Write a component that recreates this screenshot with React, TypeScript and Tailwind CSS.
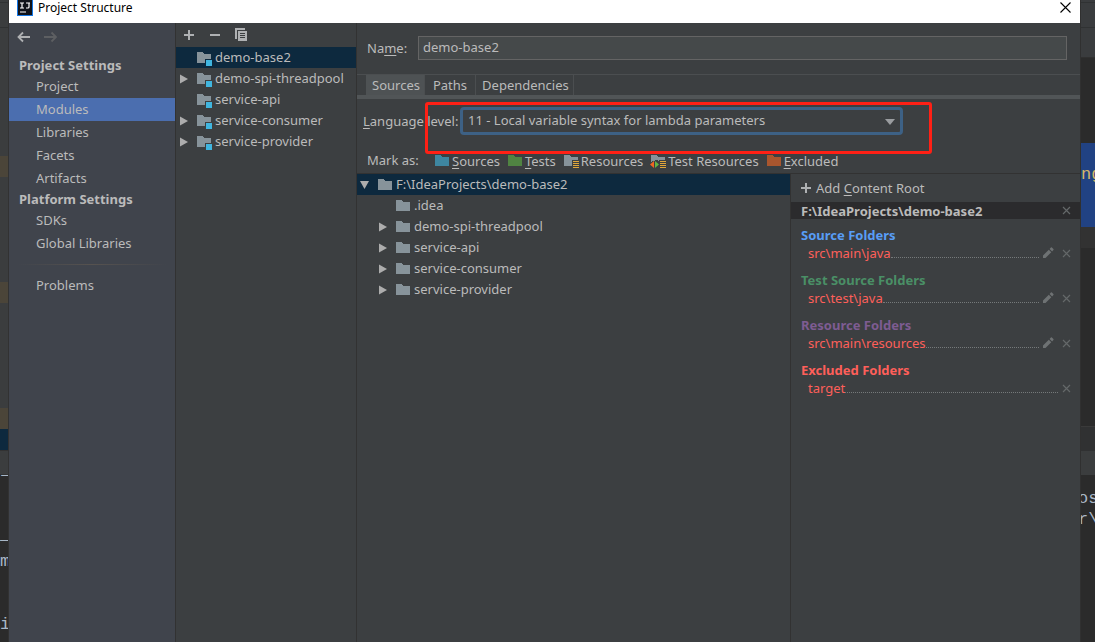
import { useState, type ReactNode } from "react";

/* ─────────────────────────────────────────────
   DATA
───────────────────────────────────────────── */
type TreeItem = { name: string; expandable: boolean };

const PROJECT_SETTINGS = ["Project", "Modules", "Libraries", "Facets", "Artifacts"];
const PLATFORM_SETTINGS = ["SDKs", "Global Libraries"];

const MODULES: TreeItem[] = [
  { name: "demo-base2", expandable: false },
  { name: "demo-spi-threadpool", expandable: true },
  { name: "service-api", expandable: false },
  { name: "service-consumer", expandable: true },
  { name: "service-provider", expandable: true },
];

const FOLDERS: TreeItem[] = [
  { name: ".idea", expandable: false },
  { name: "demo-spi-threadpool", expandable: true },
  { name: "service-api", expandable: true },
  { name: "service-consumer", expandable: true },
  { name: "service-provider", expandable: true },
];

const TABS = [
  { name: "Sources", padding: "pl-1.5 pr-1" },
  { name: "Paths", padding: "px-2" },
  { name: "Dependencies", padding: "pl-1.5 pr-1" },
];

const ROOT_GROUPS = [
  { title: "Source Folders", path: "src\\main\\java", color: "text-[#589df6]", editable: true },
  { title: "Test Source Folders", path: "src\\test\\java", color: "text-[#4a8f66]", editable: true },
  { title: "Resource Folders", path: "src\\main\\resources", color: "text-[#7e5c92]", editable: true },
  { title: "Excluded Folders", path: "target", color: "text-[#ff5f5a]", editable: false },
];

/* ─────────────────────────────────────────────
   ICONS
───────────────────────────────────────────── */
function FolderIcon({ color = "#87939a", badge }: { color?: string; badge?: "module" | "resources" | "test" }) {
  return (
    <svg width="16" height="16" viewBox="0 0 16 16" className="shrink-0" shapeRendering="crispEdges">
      {!badge && <path d="M1 2h5l2 2h7v9H1z" fill={color} />}
      {badge === "module" && (
        <>
          <path d="M1 2h5l2 2h7v5H9v4H1z" fill={color} />
          <path d="M10 10h6v6h-6z" fill="#40b6e0" />
        </>
      )}
      {badge === "resources" && (
        <>
          <path d="M1 2h5l2 2h7v3H9v6H1z" fill={color} />
          <path d="M10 8h6v1h-6zM10 10h6v1h-6zM10 12h6v1h-6zM10 14h6v1h-6z" fill="#e0a63a" />
        </>
      )}
      {badge === "test" && (
        <>
          <path d="M1 2h5l2 2h7v3H9v1L6 7 3 8 1 9z" fill={color} />
          <path d="M10 8h6v1h-6zM10 10h6v1h-6zM10 12h6v1h-6zM10 14h6v1h-6z" fill="#e0a63a" />
          <path d="M4 8v7L0 11.500z" fill="#f26522" shapeRendering="auto" />
          <path d="M5 8v7l4-3.500z" fill="#62b543" shapeRendering="auto" />
        </>
      )}
    </svg>
  );
}

function Chevron({ open = false }: { open?: boolean }) {
  return (
    <svg width="10" height="10" viewBox="0 0 10 10" fill="#adadad" className="shrink-0">
      <path d={open ? "M0 1h9L4.500 9z" : "M1 0.500v9L9 5z"} />
    </svg>
  );
}

function CrossIcon() {
  return (
    <svg width="9" height="9" viewBox="0 0 9 9" stroke="#646869" strokeWidth="1.200">
      <path d="M1 1l7 7M8 1L1 8" />
    </svg>
  );
}

function PencilIcon() {
  return (
    <svg width="12" height="12" viewBox="0 0 12 12" fill="#6e7273">
      <path d="M1 11V8.500l5.800-5.800 2.500 2.500L3.500 11zM7.600 1.900L8.900.600q.5-.5 1 0l1.500 1.500q.5.5 0 1l-1.300 1.300z" />
    </svg>
  );
}

function PlusIcon() {
  return (
    <svg width="12" height="12" viewBox="0 0 12 12" fill="#afb1b3" className="shrink-0">
      <path d="M5 1h2v4h4v2H7v4H5V7H1V5h4z" />
    </svg>
  );
}

function Mnemonic({ children }: { children: ReactNode }) {
  return <u className="underline-offset-2">{children}</u>;
}

/* ─────────────────────────────────────────────
   EDITOR STRIPS (the IDE window behind the dialog)
───────────────────────────────────────────── */
function LeftStrip() {
  return (
    <div aria-hidden="true" className="flex w-[9px] shrink-0 flex-col overflow-hidden border-r border-[#323232] bg-[#3b3d3e]">
      <div className="mt-0.5 h-[26px] shrink-0 border-y border-[#303233]" />
      <div className="mt-32 h-[21px] shrink-0 bg-[#4b4539]" />
      <div className="mt-[105px] h-[21px] shrink-0 bg-[#4b4539]" />
      <div className="mt-[105px] h-[21px] shrink-0 bg-[#4b4539]" />
      <div className="h-[21px] shrink-0 bg-[#0d293e]" />
      <div className="h-[25px] shrink-0 border-y border-[#323232]" />
      <div className="flex-1 bg-[#2b2b2b] font-['Liberation_Mono',monospace] text-[17px] leading-[21px] text-[#a9b7c6]">
        <div className="flex h-[7px] items-end overflow-hidden">i</div>
        <div className="mt-[42px] h-[21px]">_</div>
        <div className="h-[21px] mt-1.5">m</div>
        <div className="mt-[42px] h-[21px]">i</div>
      </div>
    </div>
  );
}

function RightStrip() {
  return (
    <div aria-hidden="true" className="flex w-[15px] shrink-0 flex-col overflow-hidden border-l border-[#303030] bg-[#2b2b2b] font-['Liberation_Mono',monospace] text-[17px] leading-[21px] text-[#a9b7c6]">
      <div className="h-[58px] shrink-0 border-b border-[#303030] bg-[#3a3c3e] pt-0.5">
        <div className="h-[26px] border-y border-[#303233]" />
      </div>
      <div className="mt-[85px] h-[84px] shrink-0 bg-[#214283] pt-[21px] text-[#d5b66a]">ng</div>
      <div className="h-[21px] shrink-0 bg-[#323232]" />
      <div className="mt-[178px] h-[25px] shrink-0 border-t border-[#3a3a3a] bg-[#303132]" />
      <div className="h-6 shrink-0 bg-[#3b3d3e]" />
      <div className="mt-[13px] -indent-[3px]">
        <div className="h-[21px]">os</div>
        <div className="h-[21px]">r\</div>
      </div>
    </div>
  );
}

/* ─────────────────────────────────────────────
   SIDEBAR
───────────────────────────────────────────── */
function SidebarItem({ name, active, onSelect }: { name: string; active: boolean; onSelect: () => void }) {
  return (
    <button
      onClick={onSelect}
      className={`flex h-[23px] w-full items-center pb-0.5 pl-[27px] text-left ${active ? "bg-[#4b6eaf]" : ""}`}
    >
      {name}
    </button>
  );
}

function Sidebar() {
  const [section, setSection] = useState("Modules");
  const item = (name: string) => (
    <SidebarItem key={name} name={name} active={section === name} onSelect={() => setSection(name)} />
  );

  return (
    <nav className="w-[167px] shrink-0 border-r border-[#323232] bg-[#40444c]">
      <div className="flex h-[33px] items-center gap-3 pb-1.5 pl-2">
        <button aria-label="Back">
          <svg width="14" height="12" viewBox="0 0 14 12" fill="none" stroke="#afb1b3" strokeWidth="1.800">
            <path d="M6 1.500L1.500 6 6 10.500M1.500 6H13" />
          </svg>
        </button>
        <button aria-label="Forward" disabled>
          <svg width="14" height="12" viewBox="0 0 14 12" fill="none" stroke="#5d5f62" strokeWidth="1.800">
            <path d="M8.500 1.500L13 6l-4.500 4.500M13 6H1" />
          </svg>
        </button>
      </div>
      <h2 className="flex h-[19px] items-center pb-0.5 pl-2.5 font-bold">Project Settings</h2>
      {PROJECT_SETTINGS.map(item)}
      <h2 className="flex h-[19px] items-center pb-0.5 pl-2.5 font-bold">Platform Settings</h2>
      {PLATFORM_SETTINGS.map(item)}
      <div className="mx-2 my-[9px] h-px bg-linear-to-r from-transparent via-[#56524f] to-transparent" />
      {item("Problems")}
    </nav>
  );
}

/* ─────────────────────────────────────────────
   MODULE LIST
───────────────────────────────────────────── */
function ModuleList() {
  const [selected, setSelected] = useState("demo-base2");

  return (
    <div className="w-[181px] shrink-0 border-r border-[#323232]">
      <div className="flex h-6 items-center gap-3.5 pl-[7px]">
        <button aria-label="Add">
          <PlusIcon />
        </button>
        <button aria-label="Remove">
          <svg width="12" height="12" viewBox="0 0 12 12" fill="#afb1b3">
            <path d="M1 5h10v2H1z" />
          </svg>
        </button>
        <button aria-label="Copy">
          <svg width="14" height="14" viewBox="0 0 14 14" fill="#afb1b3" shapeRendering="crispEdges">
            <path d="M0 0h10v2H2v9H0z" />
            <path fillRule="evenodd" d="M3 3h9v10H3zM5 5h5v1H5zM5 7h5v1H5zM5 9h5v1H5z" />
          </svg>
        </button>
      </div>
      {MODULES.map(m => (
        <button
          key={m.name}
          onClick={() => setSelected(m.name)}
          className={`flex h-[21px] w-full items-center pl-[3px] text-left ${selected === m.name ? "bg-[#0d293e]" : ""}`}
        >
          <span className="w-[17px]">{m.expandable && <Chevron />}</span>
          <span className="mr-[3px]"><FolderIcon badge="module" /></span>
          <span className="pb-0.5">{m.name}</span>
        </button>
      ))}
    </div>
  );
}

/* ─────────────────────────────────────────────
   MODULE EDITOR
───────────────────────────────────────────── */
function MarkButton({ icon, children }: { icon: ReactNode; children: ReactNode }) {
  return (
    <button className="flex items-center gap-0.5 whitespace-nowrap">
      {icon}
      <span>{children}</span>
    </button>
  );
}

function ContentTree() {
  return (
    <div className="min-w-0 flex-1">
      <div className="flex h-[21px] items-center gap-[7px] bg-[#0d293e] pl-[3px]">
        <Chevron open />
        <span className="flex items-center gap-[3px]">
          <FolderIcon />
          <span className="pb-0.5">F:\IdeaProjects\demo-base2</span>
        </span>
      </div>
      {FOLDERS.map(f => (
        <div key={f.name} className="flex h-[21px] items-center pl-[21px]">
          <span className="w-[17px]">{f.expandable && <Chevron />}</span>
          <span className="mr-[3px]"><FolderIcon /></span>
          <span className="pb-0.5">{f.name}</span>
        </div>
      ))}
    </div>
  );
}

function RootsPanel() {
  return (
    <div className="w-[290px] shrink-0 border-l border-[#323232]">
      <button className="flex h-7 items-center gap-1 pl-[9px]">
        <PlusIcon />
        <span>Add <Mnemonic>C</Mnemonic>ontent Root</span>
      </button>
      <div className="flex h-[17px] items-center justify-between bg-[#2b2b2d] pr-[9px] pl-2.5 font-bold">
        F:\IdeaProjects\demo-base2
        <button aria-label="Remove content root"><CrossIcon /></button>
      </div>
      <div className="flex flex-col gap-[9px] pt-[7px]">
        {ROOT_GROUPS.map(g => (
          <div key={g.title} className="pr-[9px] pl-2.5">
            <h3 className={`flex h-[18px] items-center font-bold ${g.color}`}>{g.title}</h3>
            <div className="flex h-[18px] items-center pl-[7px] text-[#ff5f5a]">
              {g.path}
              <span className="h-2.5 flex-1 border-b border-dotted border-[#75797a]" />
              {g.editable && (
                <button aria-label={`Edit ${g.path}`} className="ml-[3px]"><PencilIcon /></button>
              )}
              <button aria-label={`Remove ${g.path}`} className={g.editable ? "ml-2" : "ml-1"}><CrossIcon /></button>
            </div>
          </div>
        ))}
      </div>
    </div>
  );
}

function ModuleEditor() {
  const [name, setName] = useState("demo-base2");
  const [tab, setTab] = useState("Sources");

  return (
    <main className="flex min-w-0 flex-1 flex-col">
      <div className="flex h-[51px] items-center pr-[13px] pb-0.5 pl-2.5">
        <label htmlFor="module-name" className="w-[51px]">
          Na<Mnemonic>m</Mnemonic>e:
        </label>
        <input
          id="module-name"
          value={name}
          onChange={e => setName(e.target.value)}
          className="h-6 min-w-0 flex-1 border border-[#646464] bg-[#45494a] px-1 pb-0.5 outline-none"
        />
      </div>

      <div className="flex h-[21px] border-t border-[#4b4e50] pl-[9px]">
        {TABS.map(t => (
          <button
            key={t.name}
            onClick={() => setTab(t.name)}
            className={`border-r border-[#4b4e50] ${t.padding} ${tab === t.name ? "bg-[#4e5254]" : ""}`}
          >
            {t.name}
          </button>
        ))}
      </div>
      <div className="h-1 shrink-0 bg-[#515557]" />

      <div className="relative flex h-[43px] items-center pl-1.5">
        <label htmlFor="language-level" className="w-[97px] whitespace-nowrap">
          <Mnemonic>L</Mnemonic>anguage level:
        </label>
        <div className="relative w-[443px]">
          <select
            id="language-level"
            className="block h-7 w-full appearance-none rounded-[4px] border-3 border-[#3d6185] bg-[#3c3f41] px-[5px] pb-0.5 outline-none"
          >
            <option>11 - Local variable syntax for lambda parameters</option>
          </select>
          <svg width="10" height="6" viewBox="0 0 10 6" fill="#9a9da0" className="pointer-events-none absolute top-3 right-2">
            <path d="M0 0h10L5 6z" />
          </svg>
        </div>
        {/* red highlight around the drop-down */}
        <div className="pointer-events-none absolute top-[3px] left-[68px] h-[52px] w-[507px] rounded-[3px] border-3 border-[#ff2015]" />
      </div>

      <div className="flex h-8 items-center gap-[7px] border-b border-[#323232] pt-1.5 pl-2.5">
        <span className="w-[60px] pb-0.5 whitespace-nowrap">Mark as:</span>
        <MarkButton icon={<FolderIcon color="#3e86a0" />}><Mnemonic>S</Mnemonic>ources</MarkButton>
        <MarkButton icon={<FolderIcon color="#508442" />}><Mnemonic>T</Mnemonic>ests</MarkButton>
        <MarkButton icon={<FolderIcon badge="resources" />}>Resources</MarkButton>
        <MarkButton icon={<FolderIcon badge="test" />}>Test Resources</MarkButton>
        <MarkButton icon={<FolderIcon color="#a9562e" />}><Mnemonic>E</Mnemonic>xcluded</MarkButton>
      </div>

      <div className="flex flex-1">
        <ContentTree />
        <RootsPanel />
      </div>
    </main>
  );
}

/* ─────────────────────────────────────────────
   DIALOG
───────────────────────────────────────────── */
export default function App() {
  return (
    <div className="flex min-h-screen bg-[#2b2b2b] font-['Noto_Sans',sans-serif] text-[13px] leading-[18px] text-[#bbbbbb]">
      <LeftStrip />
      <div className="flex min-w-0 flex-1 flex-col bg-[#3c3f41]">
        <header className="flex h-[23px] items-center justify-between bg-white pr-[9px] pb-2 pl-2 text-[12px] text-black">
          <div className="flex items-center gap-[5px]">
            <svg width="16" height="16" viewBox="0 0 16 16">
              <path d="M0 0h16v16H0z" fill="#1577e6" />
              <path d="M1 0h14v15H1z" fill="#10131a" />
              <path d="M3 3h4M5 3v5M3 8h4M9 3h4M12 3v4q0 1-1 1H9M3 12h6" fill="none" stroke="#fff" strokeWidth="1.200" />
            </svg>
            <h1>Project Structure</h1>
          </div>
          <button aria-label="Close">
            <svg width="11" height="11" viewBox="0 0 11 11" stroke="#000" strokeWidth="1.100">
              <path d="M.5.5l10 10M10.500.5l-10 10" />
            </svg>
          </button>
        </header>
        <div className="flex flex-1">
          <Sidebar />
          <ModuleList />
          <ModuleEditor />
        </div>
      </div>
      <RightStrip />
    </div>
  );
}
